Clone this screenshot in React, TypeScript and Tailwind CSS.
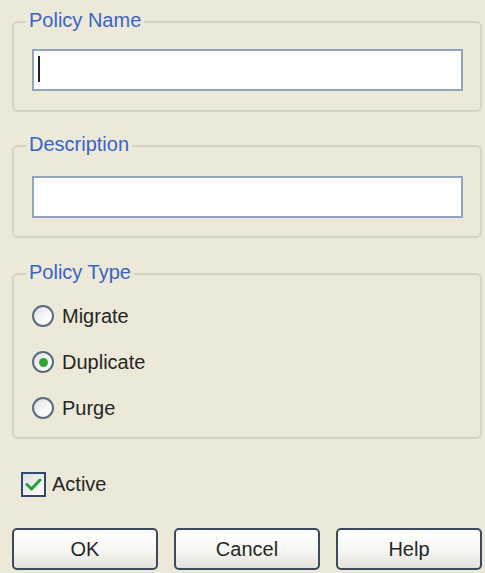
import React from "react";

const font = { fontFamily: '"Liberation Sans", Arial, sans-serif' };

function Radio({ label, checked }: { label: string; checked?: boolean }) {
  return (
    <div className="flex h-[46px] items-center">
      <span className="flex h-[22px] w-[22px] items-center justify-center rounded-full border-2 border-[#5d6a7d] bg-gradient-to-br from-[#d9dbe0] via-[#f6f6f8] to-white">
        {checked && <span className="h-[9px] w-[9px] rounded-full bg-[#2fa53a]" />}
      </span>
      <span className="ml-[8px] text-[20px] leading-[24px] text-[#262626]">{label}</span>
    </div>
  );
}

function Button({ label }: { label: string }) {
  return (
    <button className="flex h-[42px] w-[146px] items-center justify-center rounded-[5px] border-2 border-[#3b4a5f] bg-gradient-to-b from-white via-[#f7f7f4] to-[#e4e3dc] text-[20px] text-[#262626]">
      {label}
    </button>
  );
}

export default function App() {
  return (
    <div className="h-[573px] w-[485px] overflow-hidden bg-[#ece9d9]" style={font}>
      <div className="flex flex-col pl-[12px] pr-[3px]">
        <fieldset className="mt-[8px] rounded-[6px] border-2 border-[#d6d3c3] pb-[19px] pl-[12px] pt-[13px]">
          <legend className="px-[3px] pb-[4px] text-[20px] leading-[24px] text-[#3a63c6]">Policy Name</legend>
          <div className="relative ml-[6px] h-[42px] w-[431px] border-2 border-[#92a5bf] bg-white">
            <span className="absolute left-[4px] top-[5px] h-[26px] w-[2px] bg-[#222]" />
          </div>
        </fieldset>

        <fieldset className="mt-[20px] rounded-[6px] border-2 border-[#d6d3c3] pb-[18px] pl-[12px] pt-[16px]">
          <legend className="px-[3px] pb-[4px] text-[20px] leading-[24px] text-[#3a63c6]">Description</legend>
          <div className="ml-[6px] h-[42px] w-[431px] border-2 border-[#92a5bf] bg-white" />
        </fieldset>

        <fieldset className="mt-[22px] rounded-[6px] border-2 border-[#d6d3c3] pb-[6px] pl-[12px] pt-[5px]">
          <legend className="px-[3px] pb-[4px] text-[20px] leading-[24px] text-[#3a63c6]">Policy Type</legend>
          <div className="ml-[6px] flex flex-col">
            <Radio label="Migrate" />
            <Radio label="Duplicate" checked />
            <Radio label="Purge" />
          </div>
        </fieldset>

        <div className="mt-[32px] flex h-[26px] items-center pl-[9px]">
          <span className="flex h-[25px] w-[25px] items-center justify-center border-2 border-[#2f4a6e] bg-gradient-to-br from-[#dcdde2] to-white">
            <svg width="17" height="15" viewBox="0 0 17 15">
              <path d="M2 7.5 L6.5 12 L15 3" fill="none" stroke="#28a02f" strokeWidth="3" strokeLinecap="round" strokeLinejoin="round" />
            </svg>
          </span>
          <span className="ml-[6px] text-[20px] leading-[24px] text-[#262626]">Active</span>
        </div>

        <div className="mt-[31px] flex gap-[16px]">
          <Button label="OK" />
          <Button label="Cancel" />
          <Button label="Help" />
        </div>
      </div>
    </div>
  );
}
